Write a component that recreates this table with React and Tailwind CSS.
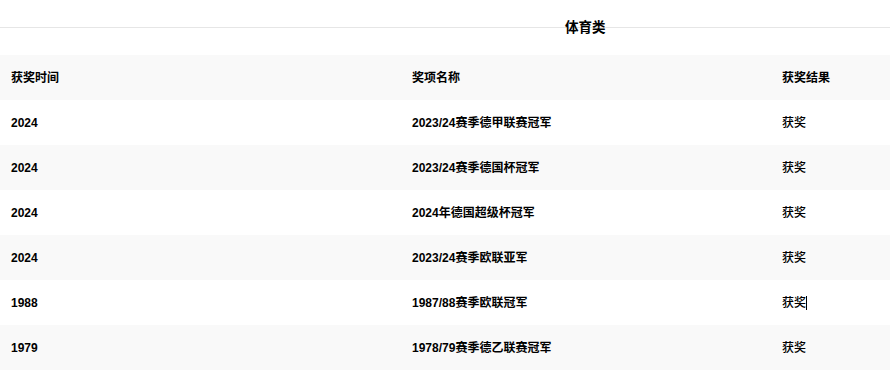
export default function App() {
  const rows = [
    ["2024", "2023/24赛季德甲联赛冠军", "获奖"],
    ["2024", "2023/24赛季德国杯冠军", "获奖"],
    ["2024", "2024年德国超级杯冠军", "获奖"],
    ["2024", "2023/24赛季欧联亚军", "获奖"],
    ["1988", "1987/88赛季欧联冠军", "获奖", true],
    ["1979", "1978/79赛季德乙联赛冠军", "获奖"],
  ];
  const font = { fontFamily: '"Liberation Sans", "Noto Sans CJK SC", sans-serif' };
  return (
    <div className="w-[890px] h-[382px] bg-white text-black" style={font}>
      <div className="relative h-[55px]">
        <div className="h-[28px] border-b border-[#e6e6e6]"></div>
        <div className="absolute left-[565px] top-[18px] text-[13.5px] font-bold leading-[20px]">体育类</div>
      </div>
      <div className="grid grid-cols-[401px_370px_119px] h-[45px] items-center bg-[#f9f9f9] text-[12px] font-bold">
        <div className="pl-[11px]">获奖时间</div>
        <div className="pl-[11px]">奖项名称</div>
        <div className="pl-[11px]">获奖结果</div>
      </div>
      {rows.map((r, i) => (
        <div
          key={i}
          className={`grid grid-cols-[401px_370px_119px] h-[45px] items-center text-[12px] ${i % 2 === 1 ? "bg-[#f9f9f9]" : "bg-white"}`}
        >
          <div className="pl-[11px] font-bold">{r[0]}</div>
          <div className="pl-[11px] font-bold">{r[1]}</div>
          <div className="pl-[11px] font-medium flex items-center">
            <span>{r[2]}</span>
            {r[3] && <span className="inline-block w-px h-[14px] bg-black"></span>}
          </div>
        </div>
      ))}
    </div>
  );
}
